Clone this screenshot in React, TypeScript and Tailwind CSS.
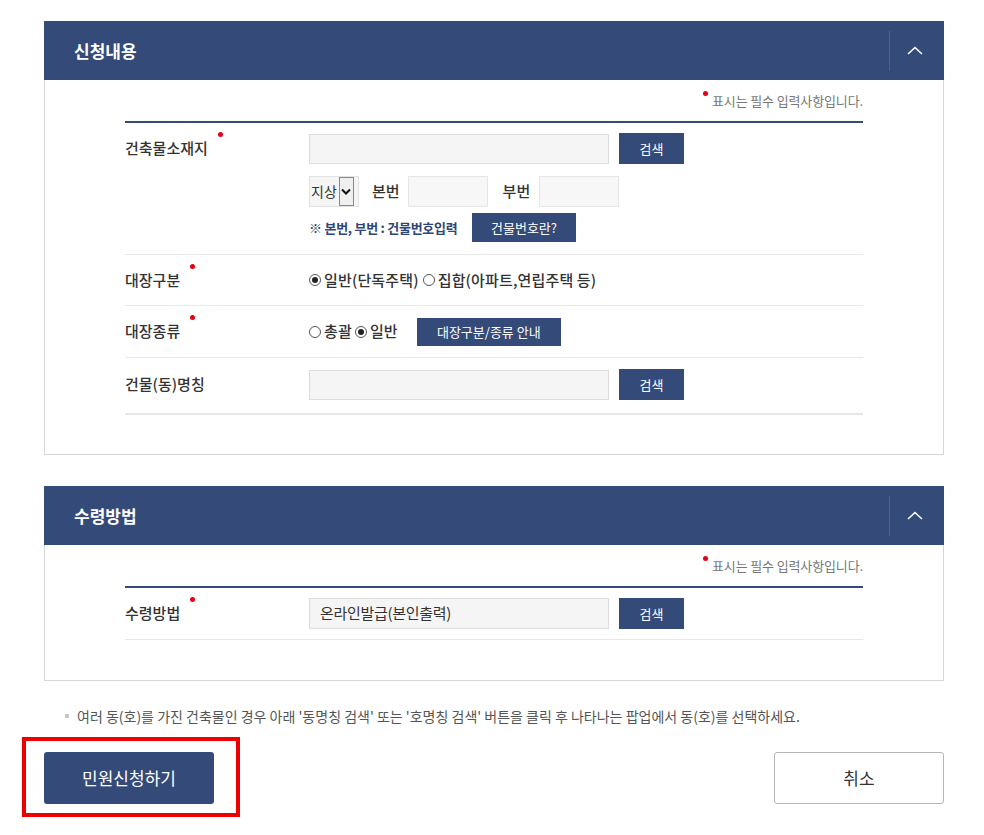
const NAVY = "bg-[#344a78]";

function Dot() {
  return <span className="absolute right-[-15px] top-[-5px] h-[5px] w-[5px] rounded-full bg-[#e60012]" />;
}

function Label({ text, required }: { text: string; required?: boolean }) {
  return (
    <div className="flex items-center">
      <span className="relative inline-block text-[15px] font-medium text-[#333]">
        {text}
        {required && <Dot />}
      </span>
    </div>
  );
}

function Btn({ children, className = "" }: { children: React.ReactNode; className?: string }) {
  return (
    <button className={`${NAVY} flex items-center justify-center text-[13px] text-white ${className}`}>
      {children}
    </button>
  );
}

function Radio({ checked, text }: { checked?: boolean; text: string }) {
  return (
    <span className="flex items-center gap-[3px]">
      <span className="flex h-[12px] w-[12px] items-center justify-center rounded-full border border-[#555] bg-white">
        {checked && <span className="h-[6px] w-[6px] rounded-full bg-[#222]" />}
      </span>
      <span className="text-[15px] font-medium tracking-[0.01em] text-[#333]">{text}</span>
    </span>
  );
}

function Section({ title, children }: { title: string; children: React.ReactNode }) {
  return (
    <section className="w-[900px]">
      <div className={`${NAVY} flex h-[59px] items-center justify-between`}>
        <h2 className="pl-[30px] text-[17px] font-bold text-white">{title}</h2>
        <div className="flex h-full items-center">
          <div className="h-[40px] border-l border-[#4b5f89]" />
          <div className="flex w-[54px] items-center justify-center pr-[5px]">
            <svg width="16" height="9" viewBox="0 0 16 9" fill="none">
              <polyline points="1,8 8,1.5 15,8" stroke="white" strokeWidth="1.6" />
            </svg>
          </div>
        </div>
      </div>
      <div className="border border-t-0 border-[#d6d6d6] px-[80px]">
        <p className="flex justify-end pt-[12px] text-[13px] leading-[18px] tracking-[-0.01em] text-[#777]">
          <span className="relative">
            <span className="absolute left-[-9px] top-[-1px] h-[5px] w-[5px] rounded-full bg-[#e60012]" />
            표시는 필수 입력사항입니다.
          </span>
        </p>
        <div className="mt-[11px] border-t-2 border-[#344a78]">{children}</div>
      </div>
    </section>
  );
}

const inputCls = "h-[30px] border border-[#dcdcdc] bg-[#f5f5f5]";

export default function App() {
  return (
    <div
      className="relative min-h-[835px] w-[984px] bg-white pl-[44px] pt-[21px]"
      style={{ fontFamily: '"Noto Sans CJK KR", "Noto Sans", sans-serif' }}
    >
      <Section title="신청내용">
        <div className="pb-[39px]">
          {/* 건축물소재지 */}
          <div className="grid grid-cols-[184px_1fr] border-b border-[#e8e8e8] pb-[12px] pt-[10px]">
            <div className="flex h-[30px] items-center">
              <Label text="건축물소재지" required />
            </div>
            <div className="flex flex-col">
              <div className="flex items-center">
                <div className={`${inputCls} w-[300px]`} />
                <Btn className="ml-[10px] h-[31px] w-[65px]">검색</Btn>
              </div>
              <div className="mt-[12px] flex h-[31px] items-center">
                <div className="flex h-[31px] w-[50px] items-center border border-[#e2e2e2] bg-[#f5f5f5] pl-[1px]">
                  <span className="text-[14px] text-[#333]">지상</span>
                  <span className="ml-[2px] flex h-[29px] w-[15px] items-center justify-center border border-[#888] bg-[#f0f0f0]">
                    <svg width="10" height="7" viewBox="0 0 10 7" fill="none">
                      <polyline points="1,1.5 5,5.5 9,1.5" stroke="#111" strokeWidth="2" />
                    </svg>
                  </span>
                </div>
                <span className="ml-[13px] text-[15px] font-medium text-[#333]">본번</span>
                <div className={`${inputCls} ml-[8px] h-[31px] w-[80px] border-[#e6e6e6] bg-[#f7f7f7]`} />
                <span className="ml-[15px] text-[15px] font-medium text-[#333]">부번</span>
                <div className={`${inputCls} ml-[9px] h-[31px] w-[80px] border-[#e6e6e6] bg-[#f7f7f7]`} />
              </div>
              <div className="mt-[6px] flex h-[29px] items-center">
                <span className="w-[163px] text-[13px] font-bold tracking-[-0.02em] text-[#2c4677]">
                  ※ 본번, 부번 : 건물번호입력
                </span>
                <Btn className="h-[29px] w-[104px]">건물번호란?</Btn>
              </div>
            </div>
          </div>

          {/* 대장구분 */}
          <div className="grid h-[51px] grid-cols-[184px_1fr] items-center border-b border-[#e8e8e8]">
            <Label text="대장구분" required />
            <div className="flex items-center gap-[4px]">
              <Radio checked text="일반(단독주택)" />
              <Radio text="집합(아파트,연립주택 등)" />
            </div>
          </div>

          {/* 대장종류 */}
          <div className="grid h-[52px] grid-cols-[184px_1fr] items-center border-b border-[#e8e8e8]">
            <Label text="대장종류" required />
            <div className="flex items-center">
              <Radio text="총괄" />
              <span className="ml-[3px]">
                <Radio checked text="일반" />
              </span>
              <Btn className="ml-[19px] h-[28px] w-[144px]">대장구분/종류 안내</Btn>
            </div>
          </div>

          {/* 건물(동)명칭 */}
          <div className="grid grid-cols-[184px_1fr] items-center border-b-2 border-[#e6e6e6] pb-[13px] pt-[11px]">
            <Label text="건물(동)명칭" />
            <div className="flex items-center">
              <div className={`${inputCls} w-[300px]`} />
              <Btn className="ml-[10px] h-[31px] w-[65px]">검색</Btn>
            </div>
          </div>
        </div>
      </Section>

      <div className="h-[31px]" />

      <Section title="수령방법">
        <div className="pb-[40px]">
          <div className="grid grid-cols-[184px_1fr] items-center border-b border-[#e8e8e8] pb-[10px] pt-[10px]">
            <Label text="수령방법" required />
            <div className="flex items-center">
              <div className={`${inputCls} flex h-[31px] w-[300px] items-center pl-[10px] text-[15px] tracking-[-0.02em] text-[#333]`}>
                온라인발급(본인출력)
              </div>
              <Btn className="ml-[10px] h-[31px] w-[65px]">검색</Btn>
            </div>
          </div>
        </div>
      </Section>

      <p className="mt-[26px] flex items-center pl-[21px] text-[14px] leading-[18px] text-[#555]">
        <span className="mr-[8px] h-[4px] w-[4px] bg-[#c8c8c8]" />
        여러 동(호)를 가진 건축물인 경우 아래 '동명칭 검색' 또는 '호명칭 검색' 버튼을 클릭 후 나타나는 팝업에서 동(호)를 선택하세요.
      </p>

      <div className="mt-[27px] flex w-[900px] items-center justify-between">
        <button className={`${NAVY} h-[52px] w-[170px] rounded-[3px] text-[17px] text-white`}>민원신청하기</button>
        <button className="h-[52px] w-[170px] rounded-[3px] border border-[#b5b5b5] bg-white text-[17px] text-[#333]">
          취소
        </button>
      </div>

      {/* highlight box */}
      <div className="absolute left-[22px] top-[737px] h-[80px] w-[218px] border-[4px] border-[#ee0000]" />
    </div>
  );
}
